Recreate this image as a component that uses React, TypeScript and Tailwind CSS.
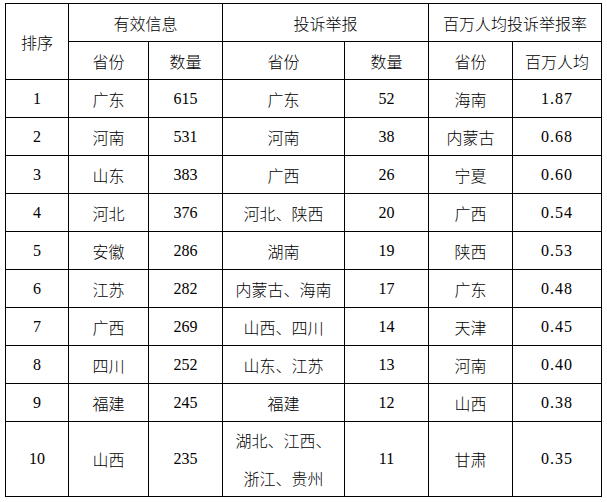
const rows: [string, string, string, string[], string, string, string][] = [
  ["1", "广东", "615", ["广东"], "52", "海南", "1.87"],
  ["2", "河南", "531", ["河南"], "38", "内蒙古", "0.68"],
  ["3", "山东", "383", ["广西"], "26", "宁夏", "0.60"],
  ["4", "河北", "376", ["河北、陕西"], "20", "广西", "0.54"],
  ["5", "安徽", "286", ["湖南"], "19", "陕西", "0.53"],
  ["6", "江苏", "282", ["内蒙古、海南"], "17", "广东", "0.48"],
  ["7", "广西", "269", ["山西、四川"], "14", "天津", "0.45"],
  ["8", "四川", "252", ["山东、江苏"], "13", "河南", "0.40"],
  ["9", "福建", "245", ["福建"], "12", "山西", "0.38"],
  ["10", "山西", "235", ["湖北、江西、", "浙江、贵州"], "11", "甘肃", "0.35"],
];

const cjk = "font-['Noto_Sans_CJK_SC',sans-serif] font-light";
const num = "font-['Liberation_Serif','Noto_Sans_CJK_SC',serif] font-normal";
const cell = "border border-black text-center align-middle p-0";

export default function App() {
  return (
    <div className="w-[607px] h-[502px] bg-white pl-[5px] pt-[3px] text-black text-[16px] leading-none">
      <table className="table-fixed border-collapse w-[596px]">
        <colgroup>
          <col className="w-[63px]" />
          <col className="w-[80px]" />
          <col className="w-[74px]" />
          <col className="w-[122px]" />
          <col className="w-[84px]" />
          <col className="w-[84px]" />
          <col className="w-[89px]" />
        </colgroup>
        <thead>
          <tr className="h-[38px]">
            <th rowSpan={2} className={`${cell} ${cjk}`}>排序</th>
            <th colSpan={2} className={`${cell} ${cjk}`}>有效信息</th>
            <th colSpan={2} className={`${cell} ${cjk}`}>投诉举报</th>
            <th colSpan={2} className={`${cell} ${cjk}`}>百万人均投诉举报率</th>
          </tr>
          <tr className="h-[38px]">
            <th className={`${cell} ${cjk}`}>省份</th>
            <th className={`${cell} ${cjk}`}>数量</th>
            <th className={`${cell} ${cjk}`}>省份</th>
            <th className={`${cell} ${cjk}`}>数量</th>
            <th className={`${cell} ${cjk}`}>省份</th>
            <th className={`${cell} ${cjk}`}>百万人均</th>
          </tr>
        </thead>
        <tbody>
          {rows.map((r) => (
            <tr key={r[0]} className={r[3].length > 1 ? "h-[75px]" : "h-[38px]"}>
              <td className={`${cell} ${num}`}>{r[0]}</td>
              <td className={`${cell} ${cjk}`}>{r[1]}</td>
              <td className={`${cell} ${num}`}>{r[2]}</td>
              <td className={`${cell} ${cjk}`}>
                <div className="flex flex-col items-center gap-[22px]">
                  {r[3].map((line) => (
                    <span key={line}>{line}</span>
                  ))}
                </div>
              </td>
              <td className={`${cell} ${num}`}>{r[4]}</td>
              <td className={`${cell} ${cjk}`}>{r[5]}</td>
              <td className={`${cell} ${num} tracking-[1px]`}>{r[6]}</td>
            </tr>
          ))}
        </tbody>
      </table>
    </div>
  );
}
